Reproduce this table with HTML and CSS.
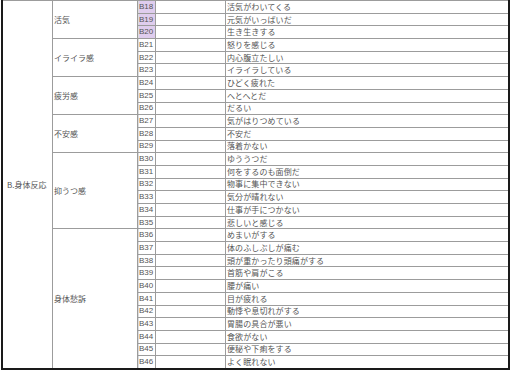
FILE: index.html
```html
<!DOCTYPE html>
<html lang="ja">
<head>
<meta charset="utf-8">
<link rel="stylesheet" href="styles.css">
</head>
<body>
<div class="sheet">
  <div class="major">B.身体反応</div>

  <div class="cat r3">活気</div>
  <div class="code hl">B18</div><div class="blank"></div><div class="item">活気がわいてくる</div>
  <div class="code hl">B19</div><div class="blank"></div><div class="item">元気がいっぱいだ</div>
  <div class="code hl">B20</div><div class="blank"></div><div class="item">生き生きする</div>

  <div class="cat r3">イライラ感</div>
  <div class="code">B21</div><div class="blank"></div><div class="item">怒りを感じる</div>
  <div class="code">B22</div><div class="blank"></div><div class="item">内心腹立たしい</div>
  <div class="code">B23</div><div class="blank"></div><div class="item">イライラしている</div>

  <div class="cat r3">疲労感</div>
  <div class="code">B24</div><div class="blank"></div><div class="item">ひどく疲れた</div>
  <div class="code">B25</div><div class="blank"></div><div class="item">へとへとだ</div>
  <div class="code">B26</div><div class="blank"></div><div class="item">だるい</div>

  <div class="cat r3">不安感</div>
  <div class="code">B27</div><div class="blank"></div><div class="item">気がはりつめている</div>
  <div class="code">B28</div><div class="blank"></div><div class="item">不安だ</div>
  <div class="code">B29</div><div class="blank"></div><div class="item">落着かない</div>

  <div class="cat r6">抑うつ感</div>
  <div class="code">B30</div><div class="blank"></div><div class="item">ゆううつだ</div>
  <div class="code">B31</div><div class="blank"></div><div class="item">何をするのも面倒だ</div>
  <div class="code">B32</div><div class="blank"></div><div class="item">物事に集中できない</div>
  <div class="code">B33</div><div class="blank"></div><div class="item">気分が晴れない</div>
  <div class="code">B34</div><div class="blank"></div><div class="item">仕事が手につかない</div>
  <div class="code">B35</div><div class="blank"></div><div class="item">悲しいと感じる</div>

  <div class="cat r11">身体愁訴</div>
  <div class="code">B36</div><div class="blank"></div><div class="item">めまいがする</div>
  <div class="code">B37</div><div class="blank"></div><div class="item">体のふしぶしが痛む</div>
  <div class="code">B38</div><div class="blank"></div><div class="item">頭が重かったり頭痛がする</div>
  <div class="code">B39</div><div class="blank"></div><div class="item">首筋や肩がこる</div>
  <div class="code">B40</div><div class="blank"></div><div class="item">腰が痛い</div>
  <div class="code">B41</div><div class="blank"></div><div class="item">目が疲れる</div>
  <div class="code">B42</div><div class="blank"></div><div class="item">動悸や息切れがする</div>
  <div class="code">B43</div><div class="blank"></div><div class="item">胃腸の具合が悪い</div>
  <div class="code">B44</div><div class="blank"></div><div class="item">食欲がない</div>
  <div class="code">B45</div><div class="blank"></div><div class="item">便秘や下痢をする</div>
  <div class="code">B46</div><div class="blank"></div><div class="item">よく眠れない</div>
</div>
</body>
</html>
```

FILE: styles.css
```css
html, body {
  margin: 0;
  padding: 0;
  background: #ffffff;
}

body {
  font-family: "Noto Sans CJK JP", "Liberation Sans", sans-serif;
  color: #555555;
  font-size: 8px;
}

.sheet {
  margin-left: 1px;
  width: 505px;
  height: 367px;
  padding-top: 1px;
  border-left: 2px solid #1a1a1a;
  border-right: 2px solid #1a1a1a;
  border-bottom: 2px solid #1a1a1a;
  background: #9c9c9c;
  display: grid;
  grid-template-columns: 49px 84px 17px 69px 1fr;
  grid-template-rows: repeat(29, 1fr);
  grid-auto-flow: row dense;
  gap: 1px;
}

.sheet > div {
  background: #ffffff;
  display: flex;
  align-items: center;
  white-space: nowrap;
  overflow: hidden;
  line-height: 1;
}

.major {
  grid-column: 1;
  grid-row: 1 / span 29;
  padding-left: 4px;
}

.cat {
  grid-column: 2;
  padding-left: 1px;
}

.r3 { grid-row: span 3; }
.r6 { grid-row: span 6; }
.r11 { grid-row: span 11; }

.code {
  grid-column: 3;
  font-family: "Liberation Sans", sans-serif;
  font-size: 8px;
  padding-left: 1px;
  box-shadow: inset 1px 0 0 #dddddd;
}

.code.hl {
  background: #dfcdee !important;
}

.blank {
  grid-column: 4;
}

.item {
  grid-column: 5;
  padding-left: 1px;
  letter-spacing: 0.1px;
}
```
